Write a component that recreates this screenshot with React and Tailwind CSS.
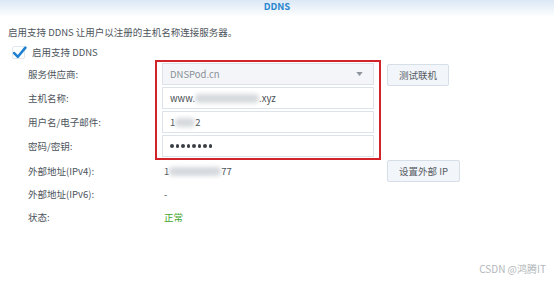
import React from "react";

const font = { fontFamily: '"Noto Sans CJK SC", "Noto Sans", sans-serif' };

function Blur({ w }) {
  return (
    <span
      className="inline-block h-[9px] bg-[#d6d9dd] blur-[2px] rounded-sm align-middle"
      style={{ width: w }}
    />
  );
}

function Field({ children, select }) {
  return (
    <div
      className={
        "h-[22px] flex items-center px-[7px] border text-[9.5px] " +
        (select
          ? "bg-[#f3f5f8] border-[#dde2e8] text-[#8a9096]"
          : "bg-white border-[#dde3ea] text-[#4a4f55]")
      }
    >
      {children}
    </div>
  );
}

function Btn({ children }) {
  return (
    <div className="h-[22px] px-[11px] inline-flex items-center bg-[#f2f5f9] border border-[#d6dee7] rounded-[2px] text-[9.5px] text-[#555c63]">
      {children}
    </div>
  );
}

export default function App() {
  return (
    <div className="relative w-[554px] h-[281px] bg-white overflow-hidden text-[#4d545b] text-[9.5px]" style={font}>
      <div className="h-[17px] flex justify-center pt-[1px] bg-gradient-to-b from-[#dbe8f5] to-white">
        <span className="h-[11px] leading-[11px] text-[9.5px] font-bold text-[#2a87cf]">DDNS</span>
      </div>

      <p className="mt-[8px] pl-[8px] h-[14px] leading-[14px]">
        启用支持 DDNS 让用户以注册的主机名称连接服务器。
      </p>

      <div className="mt-[6px] pl-[12px] h-[14px] flex items-center gap-[7px]">
        <div className="relative w-[13px] h-[13px] border border-[#e3e8ee] rounded-[2px]">
          <svg viewBox="0 0 14 14" className="absolute -left-[1px] -top-[2px] w-[15px] h-[15px]">
            <path d="M2 7.5 L5.5 11 L12.5 2.5" fill="none" stroke="#1f7fd0" strokeWidth="2.4" strokeLinecap="round" strokeLinejoin="round" />
          </svg>
        </div>
        <span>启用支持 DDNS</span>
      </div>

      <div className="mt-[1px] grid grid-cols-[155px_226px_auto]">
        <div className="pt-[3px] pl-[28px] flex flex-col gap-[2px]">
          <div className="h-[22px] flex items-center">服务供应商:</div>
          <div className="h-[22px] flex items-center">主机名称:</div>
          <div className="h-[22px] flex items-center">用户名/电子邮件:</div>
          <div className="h-[22px] flex items-center">密码/密钥:</div>
        </div>
        <div className="border-2 border-[#d2232a] px-[5px] py-[1px] flex flex-col gap-[2px]">
          <Field select>
            <span className="flex-1">DNSPod.cn</span>
            <svg viewBox="0 0 8 5" className="w-[7px] h-[4px] mr-[3px]">
              <path d="M0 0 L8 0 L4 5 Z" fill="#8d949b" />
            </svg>
          </Field>
          <Field>
            www.<Blur w="64px" />.xyz
          </Field>
          <Field>
            1<Blur w="20px" />2
          </Field>
          <Field>
            <div className="flex gap-[2px]">
              {[0, 1, 2, 3, 4, 5, 6, 7].map((i) => (
                <span key={i} className="w-[3.5px] h-[3.5px] rounded-full bg-[#3a3f45]" />
              ))}
            </div>
          </Field>
        </div>
        <div className="pl-[6px] pt-[4px]">
          <Btn>测试联机</Btn>
        </div>

        <div className="pl-[28px] h-[23px] flex items-center">外部地址(IPv4):</div>
        <div className="pl-[9px] h-[23px] flex items-center text-[#4a4f55]">
          1<Blur w="52px" />77
        </div>
        <div className="pl-[6px]">
          <Btn>设置外部 IP</Btn>
        </div>

        <div className="pl-[28px] h-[23px] flex items-center">外部地址(IPv6):</div>
        <div className="pl-[9px] h-[23px] flex items-center">-</div>
        <div />

        <div className="pl-[28px] h-[23px] flex items-center">状态:</div>
        <div className="pl-[9px] h-[23px] flex items-center text-[#3fa62c]">正常</div>
        <div />
      </div>

      <div className="absolute right-[8px] bottom-[5px] text-[10px] text-[#b4b8bc]">CSDN @鸿腾IT</div>
    </div>
  );
}
